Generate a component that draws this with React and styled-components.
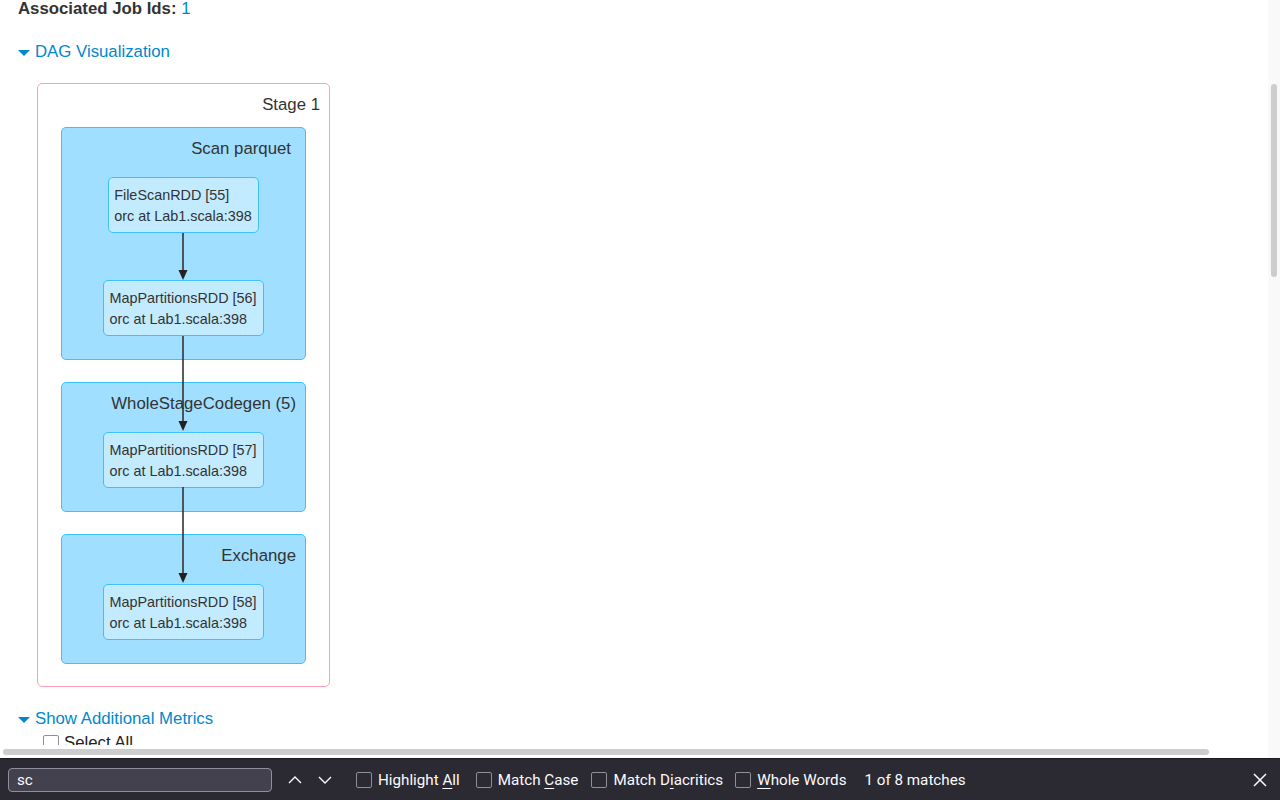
import styled, { createGlobalStyle } from "styled-components";

const GlobalStyle = createGlobalStyle`
  html, body {
    margin: 0;
    padding: 0;
    height: 100%;
    overflow: hidden;
    background: #fff;
  }
  body {
    font-family: "Liberation Sans", Arial, Helvetica, sans-serif;
    font-size: 16.8px;
    color: #333;
  }
`;

const Window = styled.div`
  display: flex;
  flex-direction: column;
  width: 1280px;
  height: 800px;
`;

const Viewport = styled.div`
  position: relative;
  flex: none;
  height: 758px;
  overflow: hidden;
`;

const Content = styled.div`
  padding: 0 0 0 18px;
  line-height: 20px;
`;

const JobLine = styled.div`
  margin-top: -1px;
  font-weight: bold;
`;

const Link = styled.a`
  color: #0088cc;
  font-weight: normal;
  text-decoration: none;
`;

const Expander = styled.div`
  display: flex;
  align-items: center;
  gap: 5px;
  margin-top: ${(p) => p.$top}px;
  color: #0088cc;
`;

const Arrow = styled.span`
  width: 0;
  height: 0;
  margin-top: 1px;
  border-left: 6px solid transparent;
  border-right: 6px solid transparent;
  border-top: 6px solid #0088cc;
`;

const Stage = styled.div`
  position: relative;
  box-sizing: border-box;
  width: 293px;
  margin: 21px 0 0 19px;
  padding: 11px 23px 22px;
  border: 1px solid #ff9fb2;
  border-radius: 5px;
  background: #fff;
`;

const StageTitle = styled.div`
  text-align: right;
  margin-right: -14px;
`;

const Clusters = styled.div`
  display: flex;
  flex-direction: column;
  gap: 22px;
  margin-top: 12px;
`;

const Cluster = styled.div`
  display: flex;
  flex-direction: column;
  align-items: center;
  padding: 10px 0 23px;
  border: 1px solid #3ec0ff;
  border-radius: 5px;
  background: #a0dfff;
`;

const ClusterLabel = styled.div`
  align-self: stretch;
  margin-top: 1px;
  text-align: right;
  padding-right: ${(p) => p.$inset}px;
`;

const Nodes = styled.div`
  display: flex;
  flex-direction: column;
  align-items: center;
  gap: 47px;
  margin-top: 18px;
`;

const Node = styled.div`
  box-sizing: border-box;
  height: 56px;
  padding: 7px 6px 7px 5px;
  border: 1px solid #3ec0ff;
  border-radius: 5px;
  background: #c3ebff;
  font-size: 14.4px;
  line-height: 21px;
  white-space: nowrap;
`;

const Edges = styled.svg`
  position: absolute;
  left: 0;
  top: 0;
  width: 100%;
  height: 100%;
  pointer-events: none;
`;

const CheckRow = styled.div`
  display: flex;
  align-items: center;
  gap: 5px;
  margin: 4px 0 0 25px;
  color: #222;
`;

const PageBox = styled.span`
  box-sizing: border-box;
  width: 16px;
  height: 16px;
  border: 1px solid #8f8f9d;
  border-radius: 2px;
  background: #fff;
`;

const HTrack = styled.div`
  position: absolute;
  left: 0;
  right: 12px;
  bottom: 0;
  height: 13px;
  background: #fff;
`;

const HThumb = styled.div`
  position: absolute;
  left: 3px;
  top: 4px;
  width: 1206px;
  height: 6px;
  border-radius: 3px;
  background: #cdcdcd;
`;

const VTrack = styled.div`
  position: absolute;
  top: 0;
  right: 0;
  bottom: 0;
  width: 12px;
  background: #f9f9f9;
`;

const VThumb = styled.div`
  position: absolute;
  left: 3px;
  top: 84px;
  width: 6px;
  height: 193px;
  border-radius: 3px;
  background: #cdcdcd;
`;

const FindBar = styled.div`
  flex: none;
  display: flex;
  align-items: center;
  height: 41px;
  padding: 0 5px 0 8px;
  border-top: 1px solid #1c1b22;
  background: #2b2a33;
  color: #fbfbfe;
  font-family: Roboto, "Noto Sans", sans-serif;
  font-size: 15.2px;
`;

const SearchField = styled.div`
  box-sizing: border-box;
  display: flex;
  align-items: center;
  width: 264px;
  height: 24px;
  padding-left: 8px;
  border: 1px solid #8f8f9d;
  border-radius: 4px;
  background: #42414d;
`;

const NavButton = styled.div`
  display: flex;
  align-items: center;
  justify-content: center;
  width: 30px;
  height: 30px;
  margin-left: ${(p) => p.$left || 0}px;
`;

const Option = styled.div`
  display: flex;
  align-items: center;
  gap: 6px;
  margin-left: ${(p) => p.$left}px;
`;

const Box = styled.span`
  box-sizing: border-box;
  width: 16px;
  height: 16px;
  border: 1px solid #8f8f9d;
  border-radius: 2px;
`;

const Key = styled.span`
  text-decoration: underline;
  text-underline-offset: 3px;
`;

const Status = styled.div`
  margin-left: 18px;
`;

const CloseButton = styled(NavButton)`
  margin-left: auto;
`;

const clusters = [
  {
    label: "Scan parquet",
    inset: 14,
    nodes: [
      ["FileScanRDD [55]", "orc at Lab1.scala:398"],
      ["MapPartitionsRDD [56]", "orc at Lab1.scala:398"],
    ],
  },
  {
    label: "WholeStageCodegen (5)",
    inset: 9,
    nodes: [["MapPartitionsRDD [57]", "orc at Lab1.scala:398"]],
  },
  {
    label: "Exchange",
    inset: 9,
    nodes: [["MapPartitionsRDD [58]", "orc at Lab1.scala:398"]],
  },
];

// edge endpoints, relative to the stage padding box
const edges = [
  [149, 196],
  [252, 347],
  [403, 499],
];

const Edge = ({ from, to }) => (
  <g>
    <line x1="145" y1={from} x2="145" y2={to - 9} stroke="#333" strokeWidth="1.6" />
    <polygon points={`140.5,${to - 10} 149.5,${to - 10} 145,${to}`} fill="#222" />
  </g>
);

const App = () => {
  return (
    <Window>
      <GlobalStyle />
      <Viewport>
        <Content>
          <JobLine>
            Associated Job Ids: <Link>1</Link>
          </JobLine>
          <Expander $top={23}>
            <Arrow />
            <span>DAG Visualization</span>
          </Expander>
          <Stage>
            <StageTitle>Stage 1</StageTitle>
            <Clusters>
              {clusters.map((c) => (
                <Cluster key={c.label}>
                  <ClusterLabel $inset={c.inset}>{c.label}</ClusterLabel>
                  <Nodes>
                    {c.nodes.map(([name, site]) => (
                      <Node key={name}>
                        {name}
                        <br />
                        {site}
                      </Node>
                    ))}
                  </Nodes>
                </Cluster>
              ))}
            </Clusters>
            <Edges>
              {edges.map(([a, b]) => (
                <Edge key={a} from={a} to={b} />
              ))}
            </Edges>
          </Stage>
          <Expander $top={22}>
            <Arrow />
            <span>Show Additional Metrics</span>
          </Expander>
          <CheckRow>
            <PageBox />
            <span>Select All</span>
          </CheckRow>
        </Content>
        <VTrack>
          <VThumb />
        </VTrack>
        <HTrack>
          <HThumb />
        </HTrack>
      </Viewport>
      <FindBar>
        <SearchField>sc</SearchField>
        <NavButton $left={8}>
          <svg width="14" height="8" viewBox="0 0 14 8">
            <polyline points="1,7 7,1 13,7" fill="none" stroke="#fbfbfe" strokeWidth="1.4" />
          </svg>
        </NavButton>
        <NavButton>
          <svg width="14" height="8" viewBox="0 0 14 8">
            <polyline points="1,1 7,7 13,1" fill="none" stroke="#fbfbfe" strokeWidth="1.4" />
          </svg>
        </NavButton>
        <Option $left={16}>
          <Box />
          <span>
            Highlight <Key>A</Key>ll
          </span>
        </Option>
        <Option $left={16}>
          <Box />
          <span>
            Match <Key>C</Key>ase
          </span>
        </Option>
        <Option $left={13}>
          <Box />
          <span>
            Match D<Key>i</Key>acritics
          </span>
        </Option>
        <Option $left={12}>
          <Box />
          <span>
            <Key>W</Key>hole Words
          </span>
        </Option>
        <Status>1 of 8 matches</Status>
        <CloseButton>
          <svg width="14" height="14" viewBox="0 0 14 14">
            <path d="M1 1 13 13 M13 1 1 13" stroke="#fbfbfe" strokeWidth="1.5" />
          </svg>
        </CloseButton>
      </FindBar>
    </Window>
  );
};

export default App;
